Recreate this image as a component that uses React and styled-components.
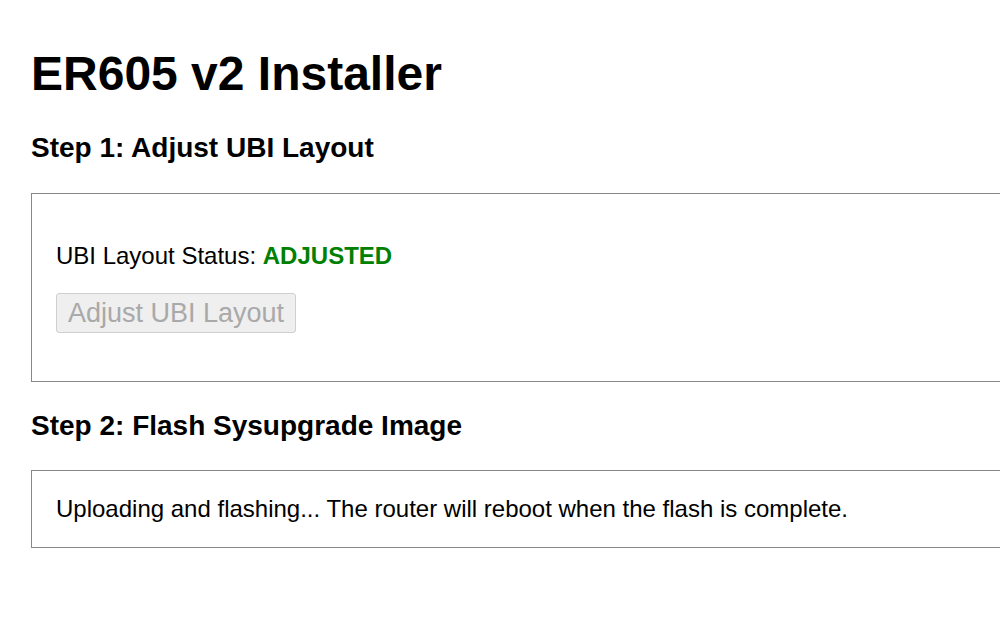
import React from 'react';
import styled, { createGlobalStyle } from 'styled-components';

const GlobalStyle = createGlobalStyle`
  html, body {
    margin: 0;
    padding: 0;
    background: #fff;
    overflow: hidden;
  }
  body {
    font-family: "Liberation Sans", Arial, sans-serif;
    color: #000;
  }
`;

const Page = styled.div`
  display: flex;
  flex-direction: column;
  align-items: flex-start;
  padding: 46px 0 0 31px;
  width: 1200px;
`;

const Title = styled.h1`
  margin: 0;
  font-size: 48px;
  line-height: 55px;
  font-weight: bold;
`;

const StepTitle = styled.h3`
  margin: ${(p) => p.top}px 0 0 0;
  font-size: 28px;
  line-height: 32px;
  font-weight: bold;
`;

const Section = styled.div`
  display: flex;
  flex-direction: column;
  align-items: flex-start;
  width: 1150px;
  box-sizing: border-box;
  margin-top: ${(p) => p.top}px;
  padding: ${(p) => p.pad};
  border: 1px solid #888;
`;

const Line = styled.p`
  margin: 0;
  font-size: 24px;
  line-height: ${(p) => p.lh || 27}px;
`;

const Status = styled.strong`
  color: #008000;
  font-weight: bold;
`;

const Button = styled.button`
  margin-top: 24px;
  height: 40px;
  padding: 0 11px;
  box-sizing: border-box;
  font-family: "Liberation Sans", Arial, sans-serif;
  font-size: 27px;
  line-height: 38px;
  color: #a9a9a9;
  background: #efefef;
  border: 1px solid #cfcfcf;
  border-radius: 3px;
  cursor: default;
`;

export default function App() {
  return (
    <>
      <GlobalStyle />
      <Page>
        <Title>ER605 v2 Installer</Title>

        <StepTitle top={31}>Step 1: Adjust UBI Layout</StepTitle>
        <Section top={29} pad="48px 24px 48px 24px">
          <Line>
            UBI Layout Status: <Status>ADJUSTED</Status>
          </Line>
          <Button disabled>Adjust UBI Layout</Button>
        </Section>

        <StepTitle top={28}>Step 2: Flash Sysupgrade Image</StepTitle>
        <Section top={28} pad="24px 24px">
          <Line lh={28}>
            Uploading and flashing... The router will reboot when the flash is complete.
          </Line>
        </Section>
      </Page>
    </>
  );
}
